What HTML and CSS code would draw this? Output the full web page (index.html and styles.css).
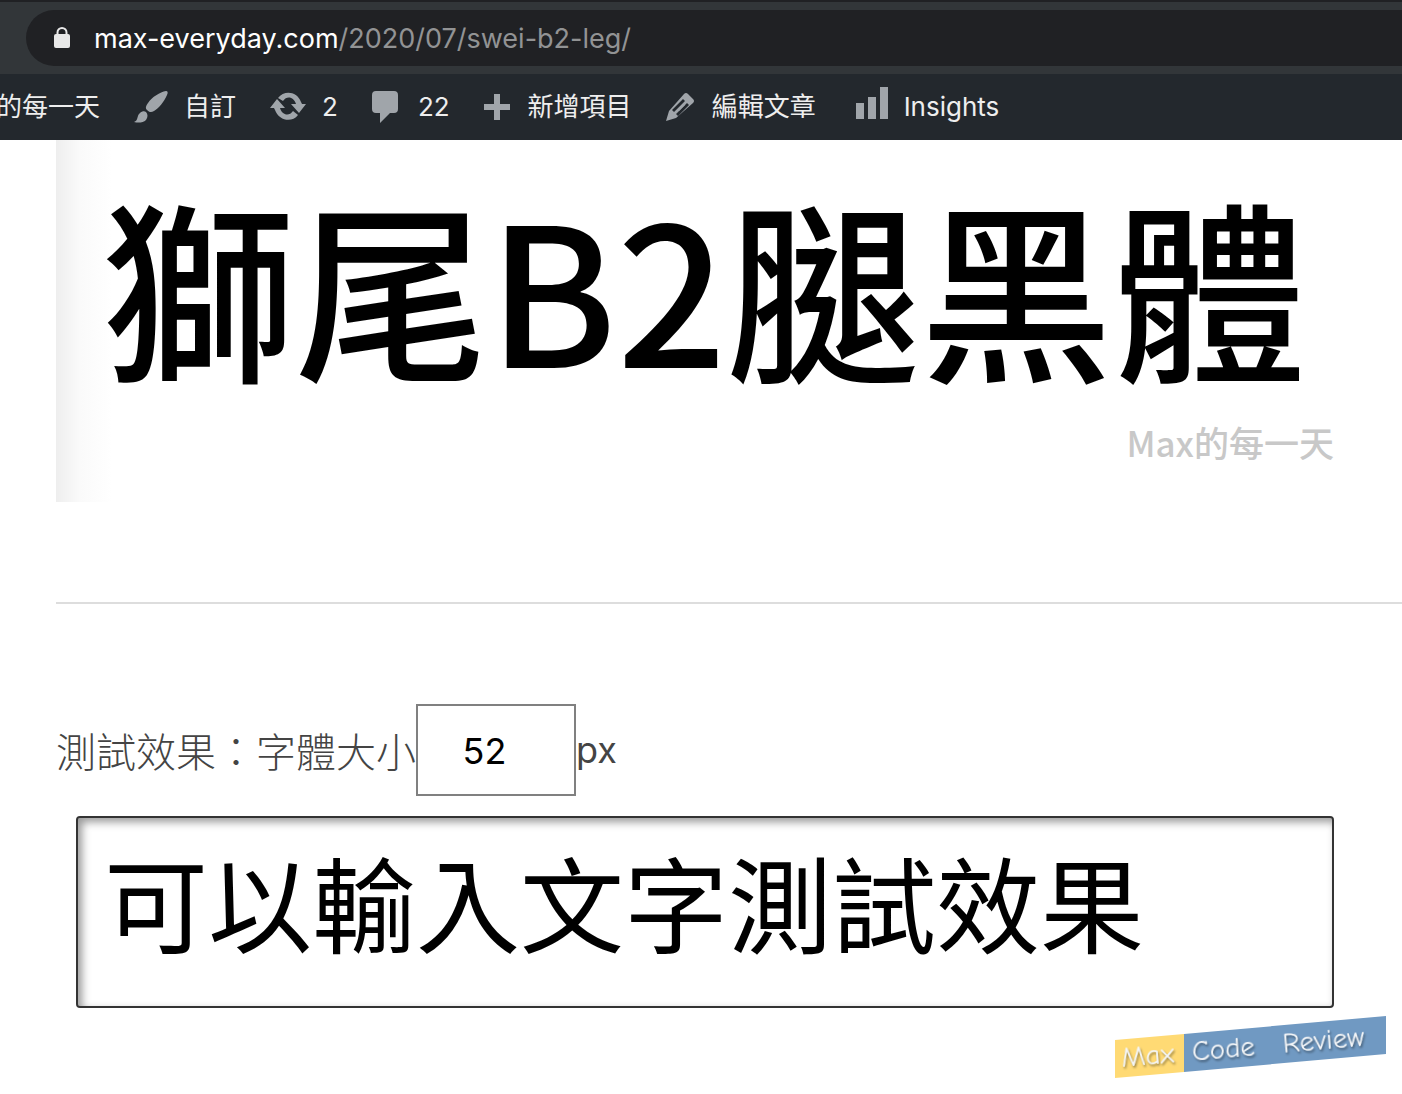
FILE: index.html
```html
<!DOCTYPE html>
<html lang="zh-Hant">
<head>
<meta charset="utf-8">
<meta name="viewport" content="width=device-width, initial-scale=1">
<title>獅尾B2腿黑體</title>
<link rel="stylesheet" href="styles.css">
</head>
<body>
<div class="browser-bar">
  <div class="address">
    <svg class="lock" width="16" height="22" viewBox="0 0 16 22" aria-hidden="true"><path d="M3.500 9V5.500a4.500 4.500 0 0 1 9 0V9" fill="none" stroke="#e8e8e8" stroke-width="2"/><rect y="7" width="16" height="14" rx="2" fill="#e8e8e8"/></svg>
    <div class="url"><span class="host">max-everyday.com</span>/2020/07/swei-b2-leg/</div>
  </div>
</div>
<nav class="admin-bar" aria-label="工具列">
  <a class="site" href="#">的每一天</a>
  <a class="customize" href="#"><svg width="34" height="34" viewBox="0 0 34 34" aria-hidden="true"><path d="M32 1c2 0 2 2 1 4-3 7-8 13-13 16-3 2-5 1-7-1s-1-4 1-7C18 7 26 2 32 1zM12 22c2 2 2 5 0 8-3 3-8 3-12 2 3-1 3-3 4-6s5-6 8-4z"/></svg>自訂</a>
  <a class="updates" href="#"><svg width="36" height="30" viewBox="0 0 36 30" aria-hidden="true"><path d="M8 6C14-2 27-1 31 10l1 2h4l-7 9-8-9h5C24 5 17 3 13 9zM0 16l7-9 8 9h-5c2 7 9 9 13 3l5 4C22 31 9 29 5 18l-1-2z"/></svg>2</a>
  <a class="comments" href="#"><svg width="26" height="32" viewBox="0 0 26 32" aria-hidden="true"><path d="M4 0h18q4 0 4 4v14q0 4-4 4h-4L8 32V22H4q-4 0-4-4V4q0-4 4-4z"/></svg>22</a>
  <a class="new" href="#"><svg width="26" height="26" viewBox="0 0 26 26" aria-hidden="true"><path d="M10 0h6v10h10v6H16v10h-6V16H0v-6h10z"/></svg>新增項目</a>
  <a class="edit" href="#"><svg width="28" height="28" viewBox="0 0 28 28" aria-hidden="true"><path fill-rule="evenodd" d="M18 1q2-2 4 0l5 5q2 2 0 4L10 25 0 28l3-10zM17 6 6 17l2 2L19 8zM21 10 10 21l2 2 11-11z"/><path d="m12 17 6-6 1 1-6 6z"/></svg>編輯文章</a>
  <a class="insights" href="#"><svg width="32" height="32" viewBox="0 0 32 32" aria-hidden="true"><path d="M0 16h8v16H0zM12 10h8v22h-8zM24 0h8v32h-8z"/></svg>Insights</a>
</nav>
<main class="content">
  <section class="banner">
    <h1 class="font-name">獅尾B2腿黑體</h1>
    <p class="credit">Max的每一天</p>
  </section>
  <hr class="divider">
  <form class="tester">
    <div class="size-row">
      <label for="size">測試效果：字體大小</label><input class="size" id="size" type="number" value="52"><span>px</span>
    </div>
    <textarea class="sample" aria-label="測試效果">可以輸入文字測試效果</textarea>
  </form>
</main>
<footer class="footer">
  <svg class="brand" width="272" height="64" viewBox="0 0 272 64" role="img" aria-label="Max Code Review">
    <path d="M0 24 69 18v38L0 62z" fill="#ffda74"/>
    <path d="M69 18 271 0v38L69 56z" fill="#7099c2"/>
    <g class="brand-text" transform="rotate(-5 7 51)">
      <text x="7" y="51">Max</text>
      <text x="78" y="51">Code</text>
      <text x="169" y="51">Review</text>
    </g>
  </svg>
</footer>
</body>
</html>
```
FILE: styles.css
```css
* { box-sizing: border-box; }

body {
  margin: 0;
  background: #fff;
  color: #444;
  font-family: Inter, "Noto Sans CJK TC", sans-serif;
  overflow-x: hidden;
}

.browser-bar {
  padding: 8px 0 8px 26px;
  border-top: 2px solid #202124;
  background: #323639;
}

.address {
  display: flex;
  align-items: center;
  gap: 24px;
  height: 56px;
  padding-left: 28px;
  border-radius: 28px 0 0 28px;
  background: #202124;
}

.url {
  color: #929394;
  font-family: Inter, sans-serif;
  font-size: 27px;
  white-space: nowrap;
}

.host { color: #fff; }

.admin-bar {
  display: flex;
  align-items: center;
  gap: 34px;
  height: 66px;
  overflow: hidden;
  background: #23282d;
}

.admin-bar a {
  display: flex;
  flex: none;
  align-items: center;
  gap: 16px;
  color: #eee;
  font-size: 26px;
  line-height: 40px;
  text-decoration: none;
}

.admin-bar svg { fill: #a0a5aa; }
.admin-bar .site { margin-left: -4px; }
.admin-bar .comments { gap: 20px; }
.admin-bar .new, .admin-bar .edit { gap: 18px; }
.admin-bar .insights { margin-left: 6px; }
.admin-bar .insights svg { margin-bottom: 8px; }

.content { padding-left: 56px; }

.banner {
  height: 362px;
  padding: 44px 68px 0 46px;
  background: linear-gradient(90deg, #eee, #fafafa 24px, #fff 56px);
}

.font-name {
  margin: 0;
  color: #000;
  font-family: "Noto Sans CJK TC", sans-serif;
  font-size: 193px;
  font-weight: 500;
  line-height: 200px;
  white-space: nowrap;
}

.credit {
  margin: 32px 0 0;
  color: #c8c8c8;
  font-family: "Noto Sans CJK TC", sans-serif;
  font-size: 35px;
  font-weight: 500;
  line-height: 52px;
  text-align: right;
}

.divider {
  margin: 100px 0;
  border: 0;
  border-top: 2px solid #ddd;
}

.tester { padding-right: 68px; }

.size-row {
  display: flex;
  align-items: center;
  font-family: Inter, "Noto Sans CJK TC", sans-serif;
  font-size: 36px;
  line-height: 60px;
}

.size-row label {
  font-family: "Noto Sans CJK TC", sans-serif;
  font-size: 40px;
  font-weight: 300;
}

.size {
  width: 160px;
  height: 92px;
  padding: 2px 8px 0 0;
  border: 2px solid #808080;
  border-radius: 0;
  background: #fff;
  color: #000;
  font: inherit;
  text-align: center;
  appearance: textfield;
}

.sample {
  display: block;
  width: calc(100% - 20px);
  height: 192px;
  margin: 20px 0 0 20px;
  padding: 8px 26px;
  border: 2px solid #333;
  border-radius: 4px;
  background: #fff;
  box-shadow: inset 4px 4px 8px #999;
  color: #000;
  font-family: "Noto Sans CJK TC", sans-serif;
  font-size: 104px;
  line-height: 150px;
  overflow: hidden;
  resize: none;
}

.footer {
  display: flex;
  justify-content: flex-end;
  padding: 8px 15px 14px;
}

.brand-text {
  fill: #f4f6f8;
  font-family: "Comic Neue", Lato, sans-serif;
  font-size: 29px;
  filter: drop-shadow(1px 2px 1px #0006);
}
```
